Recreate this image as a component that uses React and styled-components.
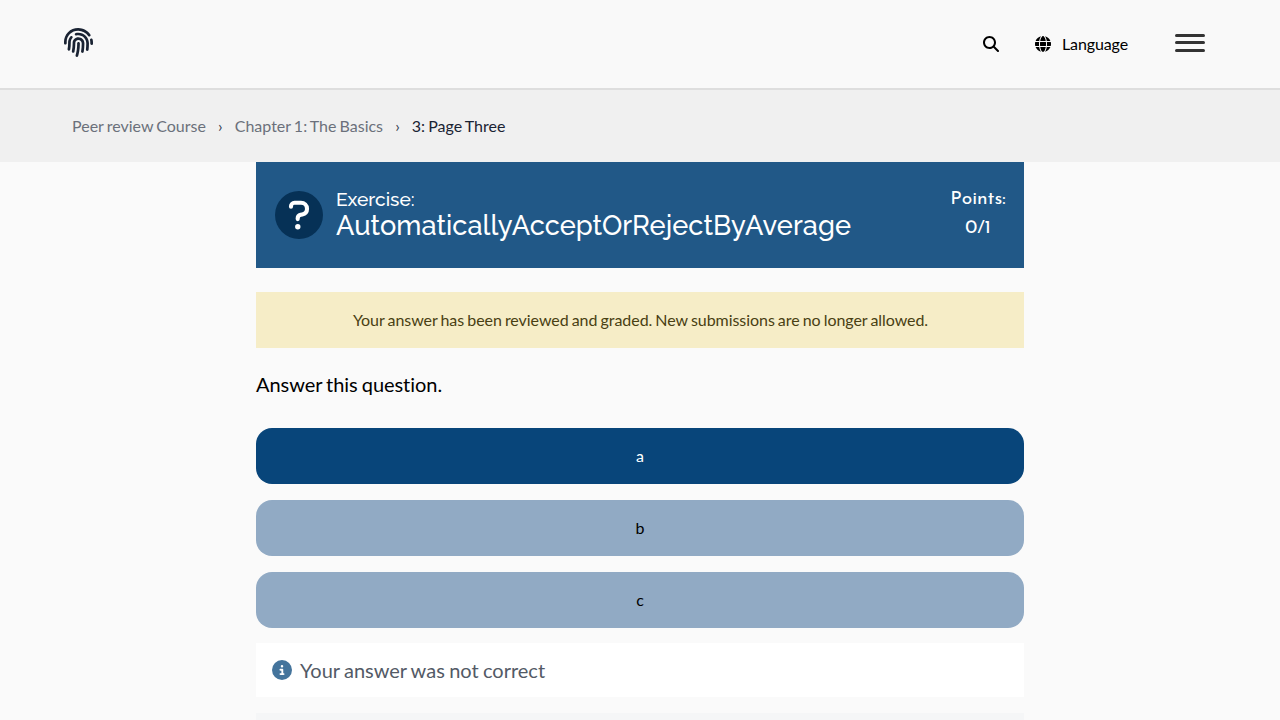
import React from "react";
import styled, { createGlobalStyle } from "styled-components";
import { FaMagnifyingGlass, FaGlobe, FaCircleInfo } from "react-icons/fa6";
import { FaFingerprint } from "react-icons/fa";

const GlobalStyle = createGlobalStyle`
  *, *::before, *::after { box-sizing: border-box; }
  body {
    margin: 0;
    height: 720px;
    overflow: hidden;
    background: #fafafa;
    font-family: Lato, sans-serif;
    font-size: 16px;
    color: #000;
  }
`;

const Header = styled.header`
  display: flex;
  align-items: center;
  height: 90px;
  padding: 0 75px 2px 64px;
  background: #f9f9f9;
  border-bottom: 2px solid #dedede;
`;

const Logo = styled.a`
  display: flex;
  margin: 0 auto 1px 0;
  color: #1a2333;
`;

const SearchButton = styled.button`
  display: flex;
  margin: 2px 36px 0 0;
  padding: 0;
  border: 0;
  background: none;
  color: #000;
`;

const LanguageButton = styled.button`
  display: flex;
  align-items: center;
  gap: 11px;
  margin: 2px 47px 0 0;
  padding: 0;
  border: 0;
  background: none;
  font: 16px/24px Lato, sans-serif;
  letter-spacing: -0.115px;
  color: #000;
`;

const MenuButton = styled.button`
  display: grid;
  grid-template-rows: 3px 3px 3px;
  row-gap: 4px;
  width: 30px;
  height: 18px;
  padding: 0;
  border: 0;
  background: none;
`;

const MenuBar = styled.span`
  border-radius: 2px;
  background: #333;
  margin-top: ${(p) => (p.$last ? "1px" : "0")};
  height: 3px;
`;

const Breadcrumbs = styled.nav`
  display: flex;
  align-items: center;
  height: 72px;
  padding-left: 72px;
  background: #f0f0f0;
  line-height: 24px;
  word-spacing: -1px;
`;

const Crumb = styled.span`
  color: ${(p) => (p.$current ? "#1a2333" : "#6b707b")};
`;

const Separator = styled.span`
  width: 28.8px;
  text-align: center;
  color: #35404f;
`;

const Content = styled.main`
  width: 768px;
  margin: 0 auto;
`;

const ExerciseHeader = styled.div`
  display: flex;
  align-items: center;
  height: 106px;
  padding: 0 18px 0 19px;
  background: #215887;
  color: #fff;
`;

const QuestionIcon = styled.svg`
  flex: none;
  width: 48px;
  height: 48px;
  margin-right: 13px;
`;

const Heading = styled.h2`
  margin: 0 auto 3px 0;
  font: 500 27.2px/30px Raleway, sans-serif;
  letter-spacing: 0.045px;
`;

const Kicker = styled.div`
  font-size: 19.2px;
  line-height: 22px;
  letter-spacing: 0;
`;

const Points = styled.div`
  width: 56px;
  margin-bottom: 2px;
  text-align: center;
  font: 400 19.2px/29px "Josefin Sans", sans-serif;
  white-space: nowrap;
`;

const Notice = styled.div`
  margin: 24px 0;
  padding: 16px 15px 16px 16px;
  background: #f6edc7;
  color: #493f13;
  line-height: 24px;
  text-align: center;
  word-spacing: -0.95px;
  letter-spacing: -0.05px;
`;

const Question = styled.p`
  margin: -1px 0 31px;
  font-size: 20px;
  line-height: 26px;
  word-spacing: -1px;
  letter-spacing: -0.05px;
`;

const Options = styled.div`
  display: grid;
  gap: 16px;
`;

const Option = styled.button`
  height: 56px;
  padding: 0;
  border: 0;
  border-radius: 16px;
  background: ${(p) => (p.$selected ? "#08457a" : "#91aac4")};
  color: ${(p) => (p.$selected ? "#fff" : "#000")};
  font: 16px/24px Lato, sans-serif;
`;

const Feedback = styled.div`
  display: flex;
  align-items: center;
  gap: 8px;
  height: 54px;
  margin: 15px 0 16px;
  padding: 0 16px;
  background: #fff;
  color: #535a66;
  font-size: 20px;
  line-height: 32px;
  word-spacing: -0.8px;
`;

const InfoIcon = styled(FaCircleInfo)`
  color: #44749c;
`;

const NextPanel = styled.div`
  height: 7px;
  background: #f5f6f7;
`;

export default function App() {
  return (
    <>
      <GlobalStyle />
      <Header>
        <Logo><FaFingerprint size={29} /></Logo>
        <SearchButton aria-label="Search"><FaMagnifyingGlass size={16} /></SearchButton>
        <LanguageButton><FaGlobe size={16} />Language</LanguageButton>
        <MenuButton aria-label="Menu">
          <MenuBar />
          <MenuBar />
          <MenuBar $last />
        </MenuButton>
      </Header>
      <Breadcrumbs>
        <Crumb>Peer review Course</Crumb>
        <Separator>›</Separator>
        <Crumb>Chapter 1: The Basics</Crumb>
        <Separator>›</Separator>
        <Crumb $current>3: Page Three</Crumb>
      </Breadcrumbs>
      <Content>
        <ExerciseHeader>
          <QuestionIcon viewBox="0 0 48 48">
            <circle cx="24" cy="24" r="24" fill="#063156" />
            <path
              d="M16 15.8v-.5a3.5 3.5 0 0 1 3.5-3.5H26a6 6 0 0 1 6 6v.2c0 3-2 4.8-4.8 5.4l-1.5.4c-2 .6-3 1.6-3 3.4v.9"
              fill="none"
              stroke="#fff"
              strokeWidth="4.1"
              strokeLinecap="round"
              strokeLinejoin="round"
            />
            <circle cx="22.8" cy="35.7" r="2.7" fill="#fff" />
          </QuestionIcon>
          <Heading>
            <Kicker>Exercise:</Kicker>
            AutomaticallyAcceptOrRejectByAverage
          </Heading>
          <Points>
            <div>Points:</div>
            <div>0/1</div>
          </Points>
        </ExerciseHeader>
        <Notice>Your answer has been reviewed and graded. New submissions are no longer allowed.</Notice>
        <Question>Answer this question.</Question>
        <Options>
          <Option $selected>a</Option>
          <Option>b</Option>
          <Option>c</Option>
        </Options>
        <Feedback><InfoIcon size={20} />Your answer was not correct</Feedback>
        <NextPanel />
      </Content>
    </>
  );
}
